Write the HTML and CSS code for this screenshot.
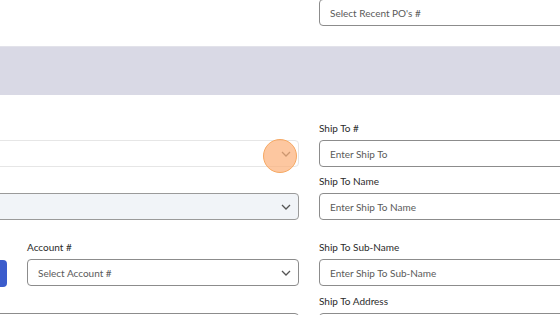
FILE: index.html
```html
<!DOCTYPE html>
<html lang="en">
<head>
  <meta charset="utf-8">
  <title>Order Entry</title>
  <link rel="stylesheet" href="styles.css">
</head>
<body>
  <div class="page">
    <section class="top">
      <div class="spacer"></div>
      <div class="input top-input">Select Recent PO's #</div>
    </section>
    <div class="band"></div>
    <section class="form">
      <div class="group">
        <div class="field">
          <label></label>
          <div class="select light"><span></span>
            <svg class="chev" viewBox="0 0 10 6"><path d="M1 1L5 5L9 1"/></svg>
          </div>
          <span class="click-dot"></span>
        </div>
        <div class="field">
          <label>Ship To #</label>
          <div class="input">Enter Ship To</div>
        </div>
        <div class="field">
          <label></label>
          <div class="select filled"><span></span>
            <svg class="chev" viewBox="0 0 10 6"><path d="M1 1L5 5L9 1"/></svg>
          </div>
        </div>
        <div class="field">
          <label>Ship To Name</label>
          <div class="input">Enter Ship To Name</div>
        </div>
      </div>
      <div class="group">
        <div class="split">
          <div class="field grow">
            <label></label>
            <div class="input-group"><div class="input"></div><button class="btn"></button></div>
          </div>
          <div class="field account">
            <label>Account #</label>
            <div class="select"><span>Select Account #</span>
              <svg class="chev" viewBox="0 0 10 6"><path d="M1 1L5 5L9 1"/></svg>
            </div>
          </div>
        </div>
        <div class="field">
          <label>Ship To Sub-Name</label>
          <div class="input">Enter Ship To Sub-Name</div>
        </div>
        <div class="field">
          <label></label>
          <div class="input"></div>
        </div>
        <div class="field">
          <label>Ship To Address</label>
          <div class="input"></div>
        </div>
      </div>
    </section>
  </div>
</body>
</html>
```
FILE: styles.css
```css
body {
  margin: 0;
  font-family: Lato, "Open Sans", sans-serif;
  font-size: 10px;
  color: #333;
  background-color: #fff;
  overflow: hidden;
}

.page {
  width: 860px;
  margin-left: -200px;
}

.top {
  display: grid;
  grid-template-columns: 499px 341px;
  column-gap: 20px;
  height: 46px;
}

.top-input {
  margin-top: -1px;
}

.band {
  height: 49px;
  background-color: #d9d9e5;
  border-top: 1px solid #e2e2ea;
  box-sizing: border-box;
}

.form {
  padding-top: 26px;
  display: flex;
  flex-direction: column;
  gap: 20px;
}

.group {
  display: grid;
  grid-template-columns: 499px 341px;
  column-gap: 20px;
  row-gap: 7px;
}

.field {
  position: relative;
  display: flex;
  flex-direction: column;
}

label {
  display: block;
  height: 14px;
  line-height: 14px;
  margin-bottom: 5px;
  color: #2b2b2b;
}

.input,
.select {
  height: 27px;
  box-sizing: border-box;
  border: 1px solid #8c8c8c;
  border-radius: 4px;
  padding: 0 10px;
  display: flex;
  align-items: center;
  color: #5a5a5a;
  background-color: #fff;
}

.select {
  justify-content: space-between;
  padding-right: 7px;
}

.select.light {
  border-color: #e6e6e6;
}

.select.filled {
  background-color: #f1f4f8;
  border-color: #9a9a9a;
}

.chev {
  width: 10px;
  height: 6px;
  fill: none;
  stroke: #555;
  stroke-width: 1.3;
}

.split {
  display: flex;
  gap: 20px;
}

.grow {
  flex: 1;
}

.account {
  width: 272px;
}

.input-group {
  display: flex;
  height: 27px;
  margin-top: 1px;
}

.input-group .input {
  flex: 1;
  border-radius: 4px 0 0 4px;
}

.btn {
  width: 32px;
  border: 0;
  border-radius: 0 4px 4px 0;
  background-color: #3b5ccc;
}

.click-dot {
  position: absolute;
  left: 463px;
  top: 18px;
  width: 32px;
  height: 32px;
  border-radius: 50%;
  border: 1.5px solid #f6a862;
  background-color: rgba(252, 178, 124, 0.72);
}
```
